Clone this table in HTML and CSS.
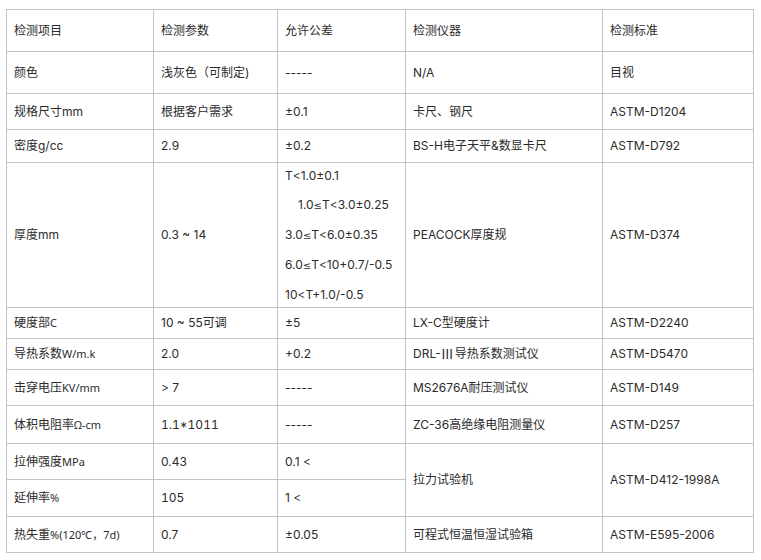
FILE: index.html
```html
<!DOCTYPE html>
<html lang="zh-CN">
<head>
<meta charset="utf-8">
<title>检测项目</title>
<link rel="stylesheet" href="styles.css">
</head>
<body>
<div class="spec" role="table">
  <div class="cell r1">检测项目</div>
  <div class="cell r1">检测参数</div>
  <div class="cell r1">允许公差</div>
  <div class="cell r1">检测仪器</div>
  <div class="cell r1">检测标准</div>

  <div class="cell r2">颜色</div>
  <div class="cell r2">浅灰色（可制定)</div>
  <div class="cell r2">-----</div>
  <div class="cell r2">N/A</div>
  <div class="cell r2">目视</div>

  <div class="cell r3">规格尺寸mm</div>
  <div class="cell r3">根据客户需求</div>
  <div class="cell r3">±0.1</div>
  <div class="cell r3">卡尺、钢尺</div>
  <div class="cell r3">ASTM-D1204</div>

  <div class="cell r4">密度g/cc</div>
  <div class="cell r4">2.9</div>
  <div class="cell r4">±0.2</div>
  <div class="cell r4">BS-H电子天平&amp;数显卡尺</div>
  <div class="cell r4">ASTM-D792</div>

  <div class="cell r5">厚度mm</div>
  <div class="cell r5">0.3 ~ 14</div>
  <div class="cell r5 lines">
    <p>T&lt;1.0±0.1</p>
    <p class="indent">1.0<span class="sym">≤</span>T&lt;3.0±0.25</p>
    <p>3.0<span class="sym">≤</span>T&lt;6.0±0.35</p>
    <p>6.0<span class="sym">≤</span>T&lt;10+0.7/-0.5</p>
    <p>10&lt;T+1.0/-0.5</p>
  </div>
  <div class="cell r5">PEACOCK厚度规</div>
  <div class="cell r5">ASTM-D374</div>

  <div class="cell r6">硬度部<span class="sm">C</span></div>
  <div class="cell r6">10 ~ 55可调</div>
  <div class="cell r6">±5</div>
  <div class="cell r6">LX-C型硬度计</div>
  <div class="cell r6">ASTM-D2240</div>

  <div class="cell r7">导热系数<span class="sm">W/m.k</span></div>
  <div class="cell r7">2.0</div>
  <div class="cell r7">+0.2</div>
  <div class="cell r7">DRL-<span class="cjk">Ⅲ</span>导热系数测试仪</div>
  <div class="cell r7">ASTM-D5470</div>

  <div class="cell r8">击穿电压<span class="sm">KV/mm</span></div>
  <div class="cell r8">&gt; 7</div>
  <div class="cell r8">-----</div>
  <div class="cell r8">MS2676A耐压测试仪</div>
  <div class="cell r8">ASTM-D149</div>

  <div class="cell r9">体积电阻率<span class="sm">Ω-cm</span></div>
  <div class="cell r9"><span class="num">1.1*1011</span></div>
  <div class="cell r9">-----</div>
  <div class="cell r9">ZC-36高绝缘电阻测量仪</div>
  <div class="cell r9">ASTM-D257</div>

  <div class="cell r10">拉伸强度<span class="sm">MPa</span></div>
  <div class="cell r10">0.43</div>
  <div class="cell r10">0.1 &lt;</div>
  <div class="cell span2">拉力试验机</div>
  <div class="cell span2">ASTM-D412-1998A</div>

  <div class="cell r11">延伸率<span class="sm">%</span></div>
  <div class="cell r11"><span class="num">105</span></div>
  <div class="cell r11">1 &lt;</div>

  <div class="cell r12">热失重<span class="sm">%(120℃，7d)</span></div>
  <div class="cell r12">0.7</div>
  <div class="cell r12">±0.05</div>
  <div class="cell r12">可程式恒温恒湿试验箱</div>
  <div class="cell r12">ASTM-E595-2006</div>
</div>
</body>
</html>
```
FILE: styles.css
```css
html, body {
  margin: 0;
  padding: 0;
  background: #ffffff;
}

body {
  padding: 9px 0 0 6px;
  font-family: Inter, "Noto Sans CJK SC", sans-serif;
  font-size: 12px;
  color: #2b2b2b;
}

.spec {
  display: grid;
  grid-template-columns: 147px 124px 128px 197px 151px;
  grid-template-rows: 42px 42px 36px 33px 145px 31px 31px 36px 38px 36px 37px 36px;
  width: 748px;
  border-top: 1px solid #c4c4c4;
  border-left: 1px solid #c4c4c4;
  box-sizing: border-box;
}

.cell {
  box-sizing: border-box;
  border-right: 1px solid #c4c4c4;
  border-bottom: 1px solid #c4c4c4;
  padding: 0 6px 0 7px;
  display: flex;
  align-items: center;
  white-space: nowrap;
  line-height: 16px;
}

.span2 {
  grid-row: span 2;
}

.lines {
  flex-direction: column;
  align-items: flex-start;
  justify-content: center;
}

.lines p {
  margin: 0;
  line-height: 29px;
}

.lines .indent {
  padding-left: 13px;
}

.num {
  font-variant-numeric: tabular-nums;
}

.sym {
  font-family: "DejaVu Sans", sans-serif;
  font-size: 10px;
}

.cjk {
  font-family: "Noto Sans CJK SC", sans-serif;
  font-size: 13px;
  letter-spacing: 1px;
}

.sm {
  font-size: 11px;
  font-family: "Noto Sans", "Noto Sans CJK SC", sans-serif;
}
```
